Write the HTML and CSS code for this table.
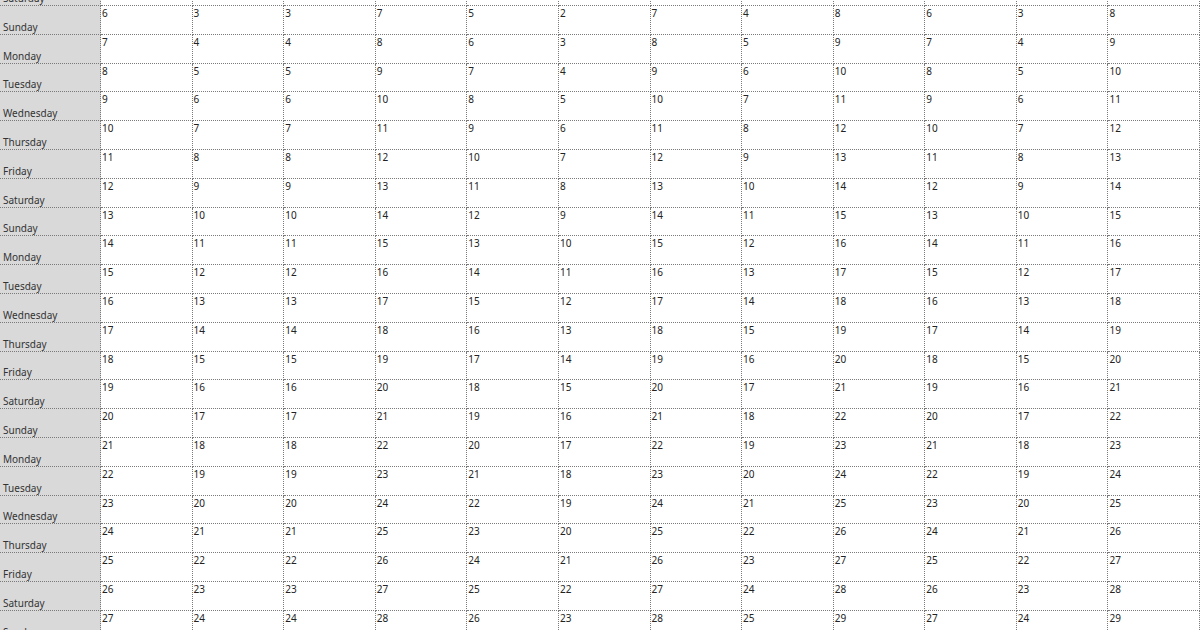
FILE: index.html
```html
<!DOCTYPE html>
<html lang="en">
<head>
<meta charset="utf-8">
<title>Calendar sheet</title>
<link rel="stylesheet" href="styles.css">
</head>
<body>
<div class="sheet">
<div class="c d">Saturday</div><div class="c"></div><div class="c"></div><div class="c"></div><div class="c"></div><div class="c"></div><div class="c"></div><div class="c"></div><div class="c"></div><div class="c"></div><div class="c"></div><div class="c"></div><div class="c"></div>
<div class="c d">Sunday</div><div class="c">6</div><div class="c">3</div><div class="c">3</div><div class="c">7</div><div class="c">5</div><div class="c">2</div><div class="c">7</div><div class="c">4</div><div class="c">8</div><div class="c">6</div><div class="c">3</div><div class="c">8</div>
<div class="c d">Monday</div><div class="c">7</div><div class="c">4</div><div class="c">4</div><div class="c">8</div><div class="c">6</div><div class="c">3</div><div class="c">8</div><div class="c">5</div><div class="c">9</div><div class="c">7</div><div class="c">4</div><div class="c">9</div>
<div class="c d">Tuesday</div><div class="c">8</div><div class="c">5</div><div class="c">5</div><div class="c">9</div><div class="c">7</div><div class="c">4</div><div class="c">9</div><div class="c">6</div><div class="c">10</div><div class="c">8</div><div class="c">5</div><div class="c">10</div>
<div class="c d">Wednesday</div><div class="c">9</div><div class="c">6</div><div class="c">6</div><div class="c">10</div><div class="c">8</div><div class="c">5</div><div class="c">10</div><div class="c">7</div><div class="c">11</div><div class="c">9</div><div class="c">6</div><div class="c">11</div>
<div class="c d">Thursday</div><div class="c">10</div><div class="c">7</div><div class="c">7</div><div class="c">11</div><div class="c">9</div><div class="c">6</div><div class="c">11</div><div class="c">8</div><div class="c">12</div><div class="c">10</div><div class="c">7</div><div class="c">12</div>
<div class="c d">Friday</div><div class="c">11</div><div class="c">8</div><div class="c">8</div><div class="c">12</div><div class="c">10</div><div class="c">7</div><div class="c">12</div><div class="c">9</div><div class="c">13</div><div class="c">11</div><div class="c">8</div><div class="c">13</div>
<div class="c d">Saturday</div><div class="c">12</div><div class="c">9</div><div class="c">9</div><div class="c">13</div><div class="c">11</div><div class="c">8</div><div class="c">13</div><div class="c">10</div><div class="c">14</div><div class="c">12</div><div class="c">9</div><div class="c">14</div>
<div class="c d">Sunday</div><div class="c">13</div><div class="c">10</div><div class="c">10</div><div class="c">14</div><div class="c">12</div><div class="c">9</div><div class="c">14</div><div class="c">11</div><div class="c">15</div><div class="c">13</div><div class="c">10</div><div class="c">15</div>
<div class="c d">Monday</div><div class="c">14</div><div class="c">11</div><div class="c">11</div><div class="c">15</div><div class="c">13</div><div class="c">10</div><div class="c">15</div><div class="c">12</div><div class="c">16</div><div class="c">14</div><div class="c">11</div><div class="c">16</div>
<div class="c d">Tuesday</div><div class="c">15</div><div class="c">12</div><div class="c">12</div><div class="c">16</div><div class="c">14</div><div class="c">11</div><div class="c">16</div><div class="c">13</div><div class="c">17</div><div class="c">15</div><div class="c">12</div><div class="c">17</div>
<div class="c d">Wednesday</div><div class="c">16</div><div class="c">13</div><div class="c">13</div><div class="c">17</div><div class="c">15</div><div class="c">12</div><div class="c">17</div><div class="c">14</div><div class="c">18</div><div class="c">16</div><div class="c">13</div><div class="c">18</div>
<div class="c d">Thursday</div><div class="c">17</div><div class="c">14</div><div class="c">14</div><div class="c">18</div><div class="c">16</div><div class="c">13</div><div class="c">18</div><div class="c">15</div><div class="c">19</div><div class="c">17</div><div class="c">14</div><div class="c">19</div>
<div class="c d">Friday</div><div class="c">18</div><div class="c">15</div><div class="c">15</div><div class="c">19</div><div class="c">17</div><div class="c">14</div><div class="c">19</div><div class="c">16</div><div class="c">20</div><div class="c">18</div><div class="c">15</div><div class="c">20</div>
<div class="c d">Saturday</div><div class="c">19</div><div class="c">16</div><div class="c">16</div><div class="c">20</div><div class="c">18</div><div class="c">15</div><div class="c">20</div><div class="c">17</div><div class="c">21</div><div class="c">19</div><div class="c">16</div><div class="c">21</div>
<div class="c d">Sunday</div><div class="c">20</div><div class="c">17</div><div class="c">17</div><div class="c">21</div><div class="c">19</div><div class="c">16</div><div class="c">21</div><div class="c">18</div><div class="c">22</div><div class="c">20</div><div class="c">17</div><div class="c">22</div>
<div class="c d">Monday</div><div class="c">21</div><div class="c">18</div><div class="c">18</div><div class="c">22</div><div class="c">20</div><div class="c">17</div><div class="c">22</div><div class="c">19</div><div class="c">23</div><div class="c">21</div><div class="c">18</div><div class="c">23</div>
<div class="c d">Tuesday</div><div class="c">22</div><div class="c">19</div><div class="c">19</div><div class="c">23</div><div class="c">21</div><div class="c">18</div><div class="c">23</div><div class="c">20</div><div class="c">24</div><div class="c">22</div><div class="c">19</div><div class="c">24</div>
<div class="c d">Wednesday</div><div class="c">23</div><div class="c">20</div><div class="c">20</div><div class="c">24</div><div class="c">22</div><div class="c">19</div><div class="c">24</div><div class="c">21</div><div class="c">25</div><div class="c">23</div><div class="c">20</div><div class="c">25</div>
<div class="c d">Thursday</div><div class="c">24</div><div class="c">21</div><div class="c">21</div><div class="c">25</div><div class="c">23</div><div class="c">20</div><div class="c">25</div><div class="c">22</div><div class="c">26</div><div class="c">24</div><div class="c">21</div><div class="c">26</div>
<div class="c d">Friday</div><div class="c">25</div><div class="c">22</div><div class="c">22</div><div class="c">26</div><div class="c">24</div><div class="c">21</div><div class="c">26</div><div class="c">23</div><div class="c">27</div><div class="c">25</div><div class="c">22</div><div class="c">27</div>
<div class="c d">Saturday</div><div class="c">26</div><div class="c">23</div><div class="c">23</div><div class="c">27</div><div class="c">25</div><div class="c">22</div><div class="c">27</div><div class="c">24</div><div class="c">28</div><div class="c">26</div><div class="c">23</div><div class="c">28</div>
<div class="c d">Sunday</div><div class="c">27</div><div class="c">24</div><div class="c">24</div><div class="c">28</div><div class="c">26</div><div class="c">23</div><div class="c">28</div><div class="c">25</div><div class="c">29</div><div class="c">27</div><div class="c">24</div><div class="c">29</div>
</div>
</body>
</html>
```

FILE: styles.css
```css
html, body {
  margin: 0;
  padding: 0;
  background: #ffffff;
  overflow: hidden;
}
body {
  width: 1200px;
  height: 630px;
}
.sheet {
  display: grid;
  grid-template-columns: 101px repeat(12, 1fr);
  grid-auto-rows: 28.8px;
  margin-top: -22.8px;
  font-family: "Noto Sans", "Open Sans", sans-serif;
  font-size: 10px;
  line-height: 12px;
  color: #222222;
}
.c {
  box-sizing: border-box;
  border-right: 1px dotted #7a7a7a;
  border-bottom: 1px dotted #7a7a7a;
  padding: 1px 1px 1px 1px;
  white-space: nowrap;
  overflow: hidden;
}
.d {
  background: #d9d9d9;
  color: #333333;
  display: flex;
  align-items: flex-end;
  padding-left: 3px;
}
```
